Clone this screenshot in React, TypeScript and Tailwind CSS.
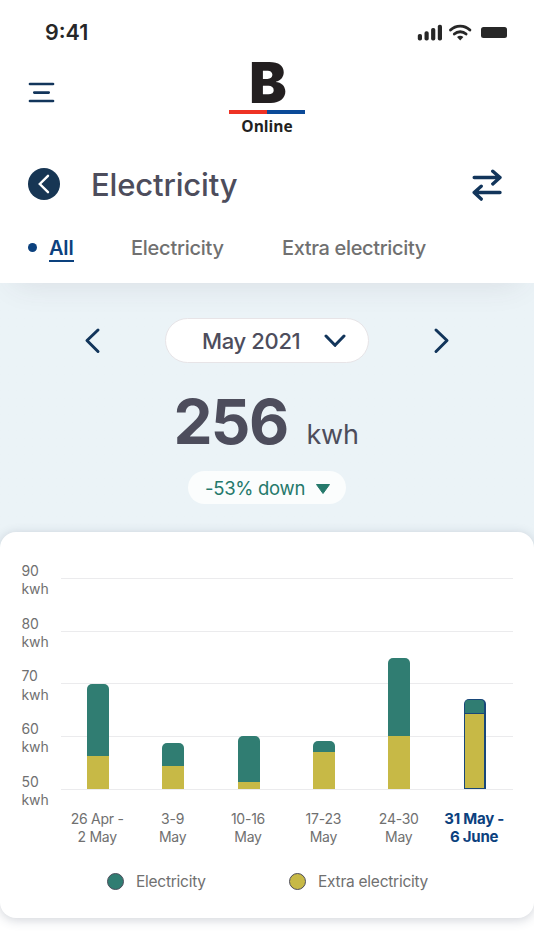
import React from "react";

type Week = { label: [string, string]; top: number; extra: number; active?: boolean };

// Heights are in pixels above the 50 kwh baseline.
const weeks: Week[] = [
  { label: ["26 Apr -", "2 May"], top: 105.5, extra: 33 },
  { label: ["3-9", "May"], top: 46, extra: 23 },
  { label: ["10-16", "May"], top: 53, extra: 7.5 },
  { label: ["17-23", "May"], top: 48.5, extra: 37.5 },
  { label: ["24-30", "May"], top: 131.5, extra: 53 },
  { label: ["31 May -", "6 June"], top: 90, extra: 76, active: true },
];

const levels = [90, 80, 70, 60, 50];

function StatusBar() {
  return (
    <div className="flex h-[62px] items-start justify-between pl-[45px] pr-[27px] text-[#272727]">
      <span className="mt-[18px] text-[21.5px] font-semibold leading-7">9:41</span>
      <svg className="mt-[22px]" width="90" height="20" viewBox="0 0 90 20" fill="currentColor">
        <rect x="0.8" y="12" width="4.2" height="6.5" rx="1.8" />
        <rect x="7.5" y="9.2" width="4.2" height="9.3" rx="1.8" />
        <rect x="14.1" y="6" width="4.2" height="12.5" rx="1.8" />
        <rect x="20.8" y="2.7" width="4.2" height="15.8" rx="1.8" />
        <path d="M33.5 8a14 14 0 0 1 19.4 0" fill="none" stroke="currentColor" strokeWidth="2.9" strokeLinecap="round" />
        <path d="M37.3 12.1a8.6 8.6 0 0 1 11.8 0" fill="none" stroke="currentColor" strokeWidth="2.8" strokeLinecap="round" />
        <path d="M40 15.1a4.8 4.8 0 0 1 6.4 0l-3.2 3.3z" />
        <rect x="64" y="5" width="26" height="11" rx="2.5" />
      </svg>
    </div>
  );
}

function Logo() {
  return (
    <div className="flex w-[76px] flex-col items-center font-['Open_Sans',sans-serif] text-[#231f20]">
      <span className="h-[48px] pl-[2px] font-['Inter',sans-serif] text-[56px] font-black leading-[42px]">B</span>
      <span className="flex h-1 w-full">
        <span className="flex-1 bg-[#ee3224]" />
        <span className="flex-1 bg-[#0b4a98]" />
      </span>
      <span className="mt-[2px] text-[15.5px] font-bold leading-[21px]">Online</span>
    </div>
  );
}

function Header() {
  return (
    <header className="relative h-[283px] bg-white shadow-[0_14px_30px_-14px_rgba(75,60,75,0.12)]">
      <StatusBar />
      <div className="grid h-[98px] grid-cols-[1fr_76px_1fr] items-start">
        <svg className="ml-[28px] mt-[20px]" width="28" height="22" viewBox="0 0 28 22" stroke="#12355b" strokeWidth="2.7" strokeLinecap="round">
          <path d="M2 2h23M6.3 10.6h14.4M2 19h23" />
        </svg>
        <Logo />
      </div>
      <div className="flex h-[50px] items-center pl-7 pr-8">
        <span className="mb-[2px] flex size-8 items-center justify-center rounded-full bg-[#173654]">
          <svg width="16" height="20" viewBox="0 0 16 20" fill="none" stroke="white" strokeWidth="2.4">
            <path d="M12 1.8L3.8 10l8.2 8.2" strokeLinecap="round" />
          </svg>
        </span>
        <h1 className="ml-[31px] flex-1 text-[31px] font-medium leading-10 tracking-[-0.15px] text-[#4d4d5c]">Electricity</h1>
        <svg width="30" height="34" viewBox="0 0 30 34" fill="none" stroke="#12355b" strokeWidth="3.4" strokeLinecap="round" strokeLinejoin="round">
          <path d="M2.2 9.5H28M20.8 3.2L28 9.5l-7.2 6.4M28 24.5H2.2M9.2 18.2l-7 6.3 7 6.6" />
        </svg>
      </div>
      <nav className="flex h-[76px] pl-[28px] pt-[24px] text-[20px] leading-7 text-[#707070]">
        <span className="mt-[9px] size-[9px] rounded-full bg-[#0c417e]" />
        <span className="ml-3 h-7 w-[25px] border-b-2 border-[#0c417e] font-semibold leading-[28px] tracking-[-0.2px] text-[#0c417e]">All</span>
        <span className="ml-[57px] w-[93px] whitespace-nowrap font-medium tracking-[-0.25px]">Electricity</span>
        <span className="ml-[58px] whitespace-nowrap font-medium tracking-[-0.35px]">Extra electricity</span>
      </nav>
    </header>
  );
}

function Chevron({ d, w, h }: { d: string; w: number; h: number }) {
  return (
    <svg width={w} height={h} viewBox={`0 0 ${w} ${h}`} fill="none" stroke="#12355b" strokeWidth="3" strokeLinecap="round" strokeLinejoin="round">
      <path d={d} />
    </svg>
  );
}

function Summary() {
  return (
    <section className="flex h-[249px] flex-col items-center pt-[35px] text-[#4d4d5c]">
      <div className="flex w-full items-center justify-between px-[84px]">
        <Chevron w={18} h={28} d="M14 3L3 13.5l11 11" />
        <button className="flex h-[45px] w-[204px] items-center justify-between rounded-full border border-[#e7e4e7] bg-white pl-[36px] pr-[22px]">
          <span className="pt-[2px] text-[22px] font-medium tracking-[-0.35px]">May 2021</span>
          <Chevron w={22} h={16} d="M2 3l9 9.3L20 3" />
        </button>
        <Chevron w={18} h={28} d="M4 3l11 10.5L4 24.5" />
      </div>
      <div className="mt-[20px] flex h-[75px] items-baseline pr-[2px]">
        <span className="text-[62px] font-bold leading-[78px] tracking-[-1.6px]">256</span>
        <span className="ml-[19px] text-[27px] tracking-[-0.3px]">kwh</span>
      </div>
      <div className="mt-[13px] flex h-[33px] w-[158px] shrink-0 items-center justify-between rounded-full bg-[#fbfdfd] pl-[17px] pr-[15px] text-[#25796b]">
        <span className="pt-[2px] text-[18.5px] tracking-[-0.3px]">-53% down</span>
        <svg className="mt-[2px] shrink-0" width="16" height="12" viewBox="0 0 16 12" fill="#25796b" stroke="#25796b" strokeLinejoin="round">
          <path d="M1.5 1.5h13L8 10.5z" />
        </svg>
      </div>
    </section>
  );
}

function Bar({ week }: { week: Week }) {
  return (
    <div
      className={`flex w-[22px] flex-col overflow-hidden rounded-t-[5px] ${week.active ? "bg-[#184779] p-[1.4px]" : ""}`}
      style={{ height: week.top }}
    >
      <div className={`flex-1 bg-[#307d72] ${week.active ? "rounded-t-[3px] border-b border-[#184779]" : ""}`} />
      <div className="bg-[#c7b946]" style={{ height: week.extra - (week.active ? 2 : 0) }} />
    </div>
  );
}

function ChartCard() {
  return (
    <section className="relative h-[386px] rounded-2xl bg-white pt-[29px] shadow-[0_2px_11px_rgba(50,65,90,0.23)]">
      <div className="flex h-[244px] pl-[21px] pr-[21px]">
        <div className="w-[40px] pl-[0.5px] pt-px text-[14px] leading-[18.4px] tracking-[-0.1px] text-[#707070]">
          {levels.map((level) => (
            <div key={level} className="h-[52.7px]">
              <div>{level}</div>
              <div>kwh</div>
            </div>
          ))}
        </div>
        <div className="grid h-[229px] flex-1">
          <div className="col-start-1 row-start-1 flex flex-col pt-[17px]">
            {levels.map((level) => (
              <div key={level} className="h-[52.7px] shrink-0 border-t border-[#ebebed]" />
            ))}
          </div>
          <div className="z-10 col-start-1 row-start-1 -ml-[0.8px] flex h-[228px] items-end">
            {weeks.map((week) => (
              <div key={week.label[0]} className="flex w-[75.4px] justify-center">
                <Bar week={week} />
              </div>
            ))}
          </div>
        </div>
      </div>
      <div className="flex pl-[59.5px] pt-[5px]">
        {weeks.map((week) => (
          <div
            key={week.label[0]}
            className={`w-[75.4px] text-center leading-[18.4px] ${week.active ? "text-[15px] font-bold tracking-[-0.25px] text-[#0c417e]" : "text-[14px] tracking-[-0.25px] text-[#707070]"}`}
          >
            <div>{week.label[0]}</div>
            <div>{week.label[1]}</div>
          </div>
        ))}
      </div>
      <div className="flex items-center pl-[107px] pt-[23px] text-[15.5px] leading-6 tracking-[-0.25px] text-[#707070]">
        <span className="size-[17px] rounded-full border border-[#4d4d5c] bg-[#307d72]" />
        <span className="ml-[12px] w-[153px]">Electricity</span>
        <span className="size-[17px] rounded-full border border-[#4d4d5c] bg-[#c7b946]" />
        <span className="ml-[12px]">Extra electricity</span>
      </div>
    </section>
  );
}

export default function App() {
  return (
    <main className="h-[950px] w-[534px] overflow-hidden bg-white font-['Inter',sans-serif]">
      <Header />
      <div className="bg-linear-to-b from-[#ebf3f7] from-[280px] to-white to-[280px]">
        <Summary />
        <ChartCard />
      </div>
    </main>
  );
}
